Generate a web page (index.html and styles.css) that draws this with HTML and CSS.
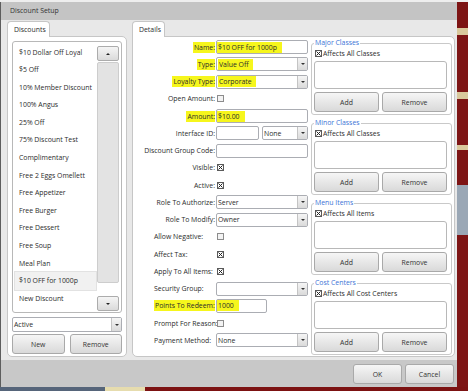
FILE: index.html
```html
<!DOCTYPE html>
<html lang="en">
<head>
    <meta charset="UTF-8">
    <meta name="viewport" content="width=device-width, initial-scale=1.0">
    <title>Discount Setup</title>
    <link rel="stylesheet" href="styles.css">
</head>
<body>
    <div class="window">
        <div class="titlebar">Discount Setup</div>

        <div class="main">
            <!-- Discounts list -->
            <div class="col col-left">
                <div class="tab tab-discounts">Discounts</div>
                <div class="panel panel-left">
                    <div class="listbox">
                        <ul class="items">
                            <li>$10 Dollar Off Loyal</li>
                            <li>$5 Off</li>
                            <li>10% Member Discount</li>
                            <li>100% Angus</li>
                            <li>25% Off</li>
                            <li>75% Discount Test</li>
                            <li>Complimentary</li>
                            <li>Free 2 Eggs Omellett</li>
                            <li>Free Appetizer</li>
                            <li>Free Burger</li>
                            <li>Free Dessert</li>
                            <li>Free Soup</li>
                            <li>Meal Plan</li>
                            <li class="selected">$10 OFF for 1000p</li>
                            <li>New Discount</li>
                        </ul>
                        <div class="scrollbar">
                            <div class="sb-btn up"></div>
                            <div class="sb-thumb"></div>
                            <div class="sb-btn down"></div>
                        </div>
                    </div>
                    <div class="combo status-combo"><span class="combo-text">Active</span><span class="drop"></span></div>
                    <div class="btn-row">
                        <button class="btn">New</button>
                        <button class="btn">Remove</button>
                    </div>
                </div>
            </div>

            <!-- Details -->
            <div class="col col-right">
                <div class="tab tab-details">Details</div>
                <div class="panel panel-right">
                    <div class="form">
                        <div class="lbl"><span class="hl">Name:</span></div>
                        <div class="input"><span class="hl">$10 OFF for 1000p</span></div>

                        <div class="lbl"><span class="hl">Type:</span></div>
                        <div class="combo"><span class="combo-text"><span class="hl">Value Off</span></span><span class="drop"></span></div>

                        <div class="lbl"><span class="hl">Loyalty Type:</span></div>
                        <div class="combo"><span class="combo-text"><span class="hl">Corporate</span></span><span class="drop"></span></div>

                        <div class="lbl">Open Amount:</div>
                        <div><svg class="cb" viewBox="0 0 7 7"><rect x=".5" y=".5" width="6" height="6" fill="#f3f3f3" stroke="#8c8c8c"/></svg></div>

                        <div class="lbl"><span class="hl">Amount:</span></div>
                        <div class="input"><span class="hl">$10.00</span></div>

                        <div class="lbl">Interface ID:</div>
                        <div class="pair">
                            <div class="input input-id"></div>
                            <div class="combo"><span class="combo-text">None</span><span class="drop"></span></div>
                        </div>

                        <div class="lbl">Discount Group Code:</div>
                        <div class="input"></div>

                        <div class="lbl">Visible:</div>
                        <div><svg class="cb" viewBox="0 0 7 7"><rect x=".5" y=".5" width="6" height="6" fill="#fff" stroke="#5a5a5a"/><path d="M1.5 1.5l4 4M5.5 1.5l-4 4" stroke="#222"/></svg></div>

                        <div class="lbl">Active:</div>
                        <div><svg class="cb" viewBox="0 0 7 7"><rect x=".5" y=".5" width="6" height="6" fill="#fff" stroke="#5a5a5a"/><path d="M1.5 1.5l4 4M5.5 1.5l-4 4" stroke="#222"/></svg></div>

                        <div class="lbl">Role To Authorize:</div>
                        <div class="combo"><span class="combo-text">Server</span><span class="drop"></span></div>

                        <div class="lbl">Role To Modify:</div>
                        <div class="combo"><span class="combo-text">Owner</span><span class="drop"></span></div>

                        <div class="lbl left">Allow Negative:</div>
                        <div><svg class="cb" viewBox="0 0 7 7"><rect x=".5" y=".5" width="6" height="6" fill="#f3f3f3" stroke="#8c8c8c"/></svg></div>

                        <div class="lbl left">Affect Tax:</div>
                        <div><svg class="cb" viewBox="0 0 7 7"><rect x=".5" y=".5" width="6" height="6" fill="#fff" stroke="#5a5a5a"/><path d="M1.5 1.5l4 4M5.5 1.5l-4 4" stroke="#222"/></svg></div>

                        <div class="lbl left">Apply To All Items:</div>
                        <div><svg class="cb" viewBox="0 0 7 7"><rect x=".5" y=".5" width="6" height="6" fill="#fff" stroke="#5a5a5a"/><path d="M1.5 1.5l4 4M5.5 1.5l-4 4" stroke="#222"/></svg></div>

                        <div class="lbl left">Security Group:</div>
                        <div class="combo"><span class="combo-text"></span><span class="drop"></span></div>

                        <div class="lbl left"><span class="hl">Points To Redeem:</span></div>
                        <div><div class="input input-points"><span class="hl">1000</span></div></div>

                        <div class="lbl left">Prompt For Reason:</div>
                        <div><svg class="cb" viewBox="0 0 7 7"><rect x=".5" y=".5" width="6" height="6" fill="#f3f3f3" stroke="#8c8c8c"/></svg></div>

                        <div class="lbl left">Payment Method:</div>
                        <div class="combo"><span class="combo-text">None</span><span class="drop"></span></div>
                    </div>

                    <div class="groups">
                        <fieldset>
                            <legend>Major Classes</legend>
                            <div class="gcheck"><svg class="cb" viewBox="0 0 7 7"><rect x=".5" y=".5" width="6" height="6" fill="#fff" stroke="#5a5a5a"/><path d="M1.5 1.5l4 4M5.5 1.5l-4 4" stroke="#222"/></svg>Affects All Classes</div>
                            <div class="glist"></div>
                            <div class="gbtns"><button class="btn">Add</button><button class="btn">Remove</button></div>
                        </fieldset>
                        <fieldset>
                            <legend>Minor Classes</legend>
                            <div class="gcheck"><svg class="cb" viewBox="0 0 7 7"><rect x=".5" y=".5" width="6" height="6" fill="#fff" stroke="#5a5a5a"/><path d="M1.5 1.5l4 4M5.5 1.5l-4 4" stroke="#222"/></svg>Affects All Classes</div>
                            <div class="glist"></div>
                            <div class="gbtns"><button class="btn">Add</button><button class="btn">Remove</button></div>
                        </fieldset>
                        <fieldset>
                            <legend>Menu Items</legend>
                            <div class="gcheck"><svg class="cb" viewBox="0 0 7 7"><rect x=".5" y=".5" width="6" height="6" fill="#fff" stroke="#5a5a5a"/><path d="M1.5 1.5l4 4M5.5 1.5l-4 4" stroke="#222"/></svg>Affects All Items</div>
                            <div class="glist"></div>
                            <div class="gbtns"><button class="btn">Add</button><button class="btn">Remove</button></div>
                        </fieldset>
                        <fieldset>
                            <legend>Cost Centers</legend>
                            <div class="gcheck"><svg class="cb" viewBox="0 0 7 7"><rect x=".5" y=".5" width="6" height="6" fill="#fff" stroke="#5a5a5a"/><path d="M1.5 1.5l4 4M5.5 1.5l-4 4" stroke="#222"/></svg>Affects All Cost Centers</div>
                            <div class="glist"></div>
                            <div class="gbtns"><button class="btn">Add</button><button class="btn">Remove</button></div>
                        </fieldset>
                    </div>
                </div>
            </div>
        </div>

        <div class="footer">
            <button class="btn btn-dlg">OK</button>
            <button class="btn btn-dlg">Cancel</button>
        </div>
    </div>
</body>
</html>
```

FILE: styles.css
```css
* { box-sizing: border-box; }
body {
    margin: 0;
    height: 391px;
    overflow: hidden;
    font-family: "Open Sans", sans-serif;
    font-size: 6.9px;
    color: #2b2b2b;
    background:
        linear-gradient(to right, #56657a 0 105px, #e6dcae 105px 145px, #7c1212 145px) left bottom / 100% 4px no-repeat,
        linear-gradient(to bottom, #eeeeee 0 2px, #7d1414 2px 28px, #d9c89c 28px 35px, #7d1414 35px 92px, #d9c89c 92px 99px, #7d1414 99px 145px, #d9c89c 145px 150px, #7d1414 150px 185px, #9aa7b5 185px 235px, #7d1414 235px) right top / 11px 100% no-repeat,
        #eeeeee;
}
.window {
    width: 457px;
    height: 385px;
    margin-top: 2px;
    border-left: 1px solid #5d5d5d;
    background: #e8e8e8;
    display: flex;
    flex-direction: column;
}
.titlebar {
    height: 18px;
    line-height: 18px;
    padding-left: 9px;
    background: #c4c4c4;
    color: #333;
}
.main {
    height: 340px;
    display: flex;
    gap: 5px;
    padding: 1px 2px 3px 6px;
}
.col { display: flex; flex-direction: column; }
.col-left { width: 120px; }
.col-right { width: 323px; }
.tab {
    align-self: flex-start;
    height: 16px;
    margin-bottom: -1px;
    padding-left: 6px;
    line-height: 15px;
    background: #fff;
    border: 1px solid #c6c6c6;
    border-bottom: none;
    border-radius: 4px 4px 0 0;
    position: relative;
    z-index: 1;
}
.tab-discounts { width: 43px; }
.tab-details { width: 33px; }
.panel {
    flex: 1;
    background: #fff;
    border: 1px solid #c6c6c6;
    border-radius: 0 5px 5px 5px;
}

/* left panel */
.panel-left {
    display: flex;
    flex-direction: column;
    padding: 4px 4px 2px;
}
.listbox {
    height: 272px;
    display: flex;
    border: 1px solid #b8b8b8;
    border-radius: 3px;
}
.items {
    list-style: none;
    margin: 0;
    padding: 1.5px 1px 0 2px;
    flex: 1;
    overflow: hidden;
}
.items li {
    height: 17.6px;
    line-height: 17.6px;
    padding-left: 4px;
    white-space: nowrap;
}
.items li.selected {
    background: #f1f1f1;
    box-shadow: 0 0 0 1px #e2e2e2;
}
.scrollbar {
    width: 24px;
    display: flex;
    flex-direction: column;
    padding: 4px 2px 1px 0;
}
.sb-btn {
    height: 15px;
    border: 1px solid #acacac;
    border-radius: 2px;
    background: linear-gradient(#f5f5f5, #dadada);
    display: flex;
    align-items: center;
    justify-content: center;
}
.sb-btn::after {
    content: "";
    border-left: 2px solid transparent;
    border-right: 2px solid transparent;
}
.sb-btn.up::after { border-bottom: 2px solid #222; }
.sb-btn.down::after { border-top: 2px solid #222; }
.sb-btn.down { margin-top: auto; }
.sb-thumb {
    height: 221px;
    margin-top: 1px;
    background: #e3e3e3;
    border: 1px solid #cdcdcd;
    border-radius: 2px;
}

.combo, .input {
    height: 14px;
    display: flex;
    align-items: center;
    background: #fff;
    border: 1px solid #abadb3;
    border-radius: 2px;
    white-space: nowrap;
}
.combo-text { flex: 1; padding-left: 1px; }
.combo-text .hl { padding: 1px 4px 1px 1px; }
.drop {
    width: 10px;
    align-self: stretch;
    border-left: 1px solid #c4c4c4;
    background: linear-gradient(#f5f5f5, #dadada);
    display: flex;
    align-items: center;
    justify-content: center;
}
.drop::after {
    content: "";
    border-left: 2px solid transparent;
    border-right: 2px solid transparent;
    border-top: 2px solid #333;
}
.status-combo { height: 15px; margin-top: 4px; }
.btn-row {
    display: grid;
    grid-template-columns: 1fr 1fr;
    gap: 5px;
    height: 20px;
    margin-top: 2px;
}
.btn {
    font: inherit;
    color: #333;
    padding: 0;
    border: 1px solid #a9a9a9;
    border-radius: 3px;
    background: linear-gradient(#f6f6f6, #d9d9d9);
}

/* right panel */
.panel-right {
    display: flex;
    gap: 3px;
    padding: 1.4px 2px 0 0;
}
.form {
    width: 175px;
    display: grid;
    grid-template-columns: 82px 92px;
    column-gap: 1px;
    grid-auto-rows: 17.25px;
    align-items: center;
    align-content: start;
}
.lbl { text-align: right; white-space: nowrap; }
.lbl.left { text-align: left; padding-left: 21px; }
.hl { background: #f6f61c; padding: 1px 0 1px 1px; }
.input .hl { padding: 1px 5px 1px 1px; }
.input-id { width: 43px; }
.input-points { width: 51px; }
.pair { display: flex; gap: 3px; }
.pair .combo { flex: 1; }
.cb { width: 7px; height: 7px; display: block; margin-left: 1px; }

.groups {
    width: 141px;
    display: flex;
    flex-direction: column;
    gap: 3px;
}
fieldset {
    margin: 0;
    padding: 0 4px 2px 2px;
    border: 1px solid #c9c9c9;
    border-radius: 3px;
}
legend {
    padding: 0 1px;
    line-height: 10px;
    color: #3b73d6;
}
.gcheck {
    height: 11px;
    display: flex;
    align-items: center;
    gap: 1px;
}
.glist {
    height: 28px;
    margin-top: 2px;
    border: 1px solid #b8b8b8;
    border-radius: 3px;
    background: #fff;
}
.gbtns {
    display: grid;
    grid-template-columns: 1fr 1fr;
    gap: 3px;
    height: 20px;
    margin-top: 3px;
}

.footer {
    flex: 1;
    background: #c8c8c8;
    display: flex;
    justify-content: flex-end;
    align-items: flex-start;
    gap: 3px;
    padding: 4px 3px 0 0;
}
.btn-dlg { width: 49px; height: 20px; }
```
